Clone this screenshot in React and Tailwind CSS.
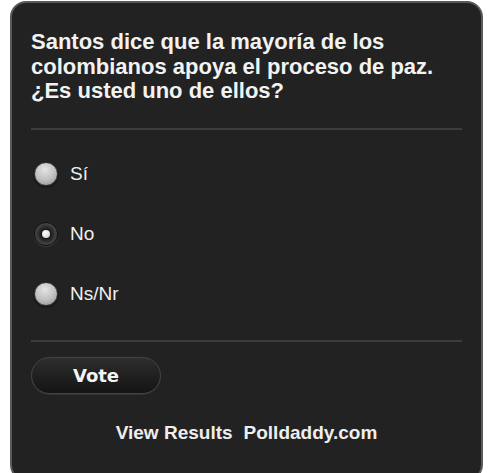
import React from "react";

function Radio({ checked }) {
  if (checked) {
    return (
      <span className="flex h-[24px] w-[24px] items-center justify-center rounded-full border border-[#111] bg-[radial-gradient(circle_at_50%_50%,#1a1a1a_30%,#4a4a4a_72%,#222_100%)] shadow-[0_1px_0_rgba(255,255,255,0.12)]">
        <span className="h-[8px] w-[8px] rounded-full bg-[radial-gradient(circle_at_40%_35%,#fff,#ccc)]" />
      </span>
    );
  }
  return (
    <span className="block h-[24px] w-[24px] rounded-full border border-[#333] bg-[radial-gradient(circle_at_45%_30%,#e4e4e4_0%,#bdbdbd_55%,#8a8a8a_100%)] shadow-[0_1px_2px_rgba(0,0,0,0.6)]" />
  );
}

const options = [
  { label: "Sí", checked: false },
  { label: "No", checked: true },
  { label: "Ns/Nr", checked: false },
];

export default function App() {
  return (
    <div className="h-[473px] w-[495px] overflow-hidden bg-white pl-[10px] pr-[12px] pt-[1px] font-['Liberation_Sans',Arial,sans-serif]">
      <div className="h-[480px] rounded-[16px] border-2 border-[#5a5a5a] bg-[#222] px-[19px] pt-[27px] text-white">
        <h1 className="text-[22px] font-bold leading-[24.5px] text-[#f2f2f2]">
          Santos dice que la mayoría de los
          <br />
          colombianos apoya el proceso de paz.
          <br />
          ¿Es usted uno de ellos?
        </h1>
        <div className="mt-[24.5px] h-[2px] bg-[#3c3c3c]" />
        <div className="flex flex-col gap-[36px] pt-[31.5px] pl-[3px]">
          {options.map((o) => (
            <label key={o.label} className="flex h-[24px] items-center gap-[12px]">
              <Radio checked={o.checked} />
              <span className="text-[19px] leading-none text-[#f0f0f0]">{o.label}</span>
            </label>
          ))}
        </div>
        <div className="mt-[34.5px] h-[2px] bg-[#3c3c3c]" />
        <button className="mt-[15px] flex h-[37px] w-[130px] items-center justify-center rounded-full border border-[#444] bg-gradient-to-b from-[#2e2e2e] to-[#141414] font-['DejaVu_Sans',Verdana,sans-serif] text-[18px] font-bold text-[#f4f4f4] shadow-[0_1px_0_rgba(255,255,255,0.08)]">
          Vote
        </button>
        <div className="mt-[25px] flex justify-center gap-[11px] text-[19px] font-bold text-[#eee]">
          <span>View Results</span>
          <span>Polldaddy.com</span>
        </div>
      </div>
    </div>
  );
}
